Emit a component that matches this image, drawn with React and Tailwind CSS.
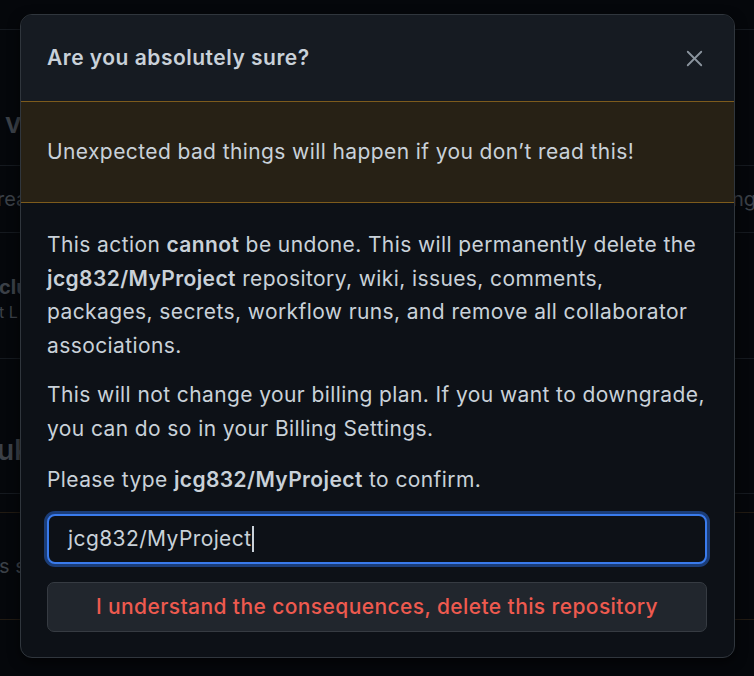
import { X } from 'lucide-react';

const font = { fontFamily: 'Inter, "Liberation Sans", sans-serif' };

function BackgroundPage() {
  return (
    <div className="flex flex-col text-[#3b4047]">
      <div className="h-[30px] border-b border-[#15191f]" />
      <div className="flex h-[136px] items-end border-b border-[#15191f] pb-[21px]">
        <span className="ml-[5px] text-[28px] font-semibold">v</span>
      </div>
      <div className="flex h-[67px] items-center justify-between border-b border-[#15191f]">
        <span className="-ml-[3px] text-[20px]">rea</span>
        <span className="-mr-[2px] text-[20px]">ng</span>
      </div>
      <div className="flex h-[125px] flex-col pt-[40px]">
        <span className="-ml-[1px] text-[20px] font-bold leading-[28px]">clu</span>
        <span className="-ml-[1px] text-[16px] leading-[22px]">t L</span>
      </div>
      <div className="flex h-[135px] items-end border-t border-[#15191f] pb-[22px]">
        <span className="-ml-[3px] text-[28px] font-semibold">uk</span>
      </div>
      <div className="h-[19px] border-t border-[#15191f]" />
      <div className="flex h-[108px] items-center border-y border-[#211a12]">
        <span className="-ml-[1px] text-[20px]">s s</span>
      </div>
    </div>
  );
}

export default function App() {
  return (
    <div className="relative h-[676px] w-full overflow-hidden bg-[#05070b]" style={font}>
      <BackgroundPage />

      <div className="absolute left-[20px] top-[14px] w-[715px] overflow-hidden rounded-[12px] border border-[#30363d] bg-[#0d1117] shadow-[0_4px_12px_rgba(0,0,0,0.6)]">
        <div className="flex h-[86px] items-center justify-between bg-[#161b22] pl-[26px] pr-[26px]">
          <h2 className="text-[21px] font-semibold tracking-[0.5px] text-[#c9d1d9]">Are you absolutely sure?</h2>
          <button className="text-[#8b949e]">
            <X size={27} strokeWidth={1.6} />
          </button>
        </div>

        <div className="flex h-[102px] items-center border-y border-[#7d5b1c] bg-[#272115] pl-[26px]">
          <p className="text-[21px] tracking-[0.4px] text-[#c9d1d9]">
            Unexpected bad things will happen if you don’t read this!
          </p>
        </div>

        <div className="flex flex-col pb-[25px] pl-[26px] pr-[27px] pt-[25px] text-[21px] leading-[33.6px] tracking-[0.4px] text-[#c9d1d9]">
          <p>
            This action <strong className="font-semibold">cannot</strong> be undone. This will permanently delete the{' '}
            <strong className="font-semibold">jcg832/MyProject</strong> repository, wiki, issues, comments, packages, secrets,
            workflow runs, and remove all collaborator associations.
          </p>
          <p className="mt-[16px]">
            This will not change your billing plan. If you want to downgrade, you can do so in your Billing Settings.
          </p>
          <p className="mt-[17px]">
            Please type <strong className="font-semibold">jcg832/MyProject</strong> to confirm.
          </p>

          <div className="mt-[18px] flex h-[50px] items-center rounded-[8px] border-2 border-[#3a7bec] bg-[#0d1117] pl-[19px] shadow-[0_0_0_3px_#1b3d78]">
            <span className="text-[21px] text-[#c9d1d9]">jcg832/MyProject</span>
            <span className="ml-[1px] h-[26px] w-[2px] bg-[#c9d1d9]" />
          </div>

          <button className="mt-[18px] flex h-[50px] items-center justify-center rounded-[7px] border border-[#363b42] bg-[#21262d] text-[21px] font-medium text-[#ee5a4f]">
            I understand the consequences, delete this repository
          </button>
        </div>
      </div>
    </div>
  );
}
